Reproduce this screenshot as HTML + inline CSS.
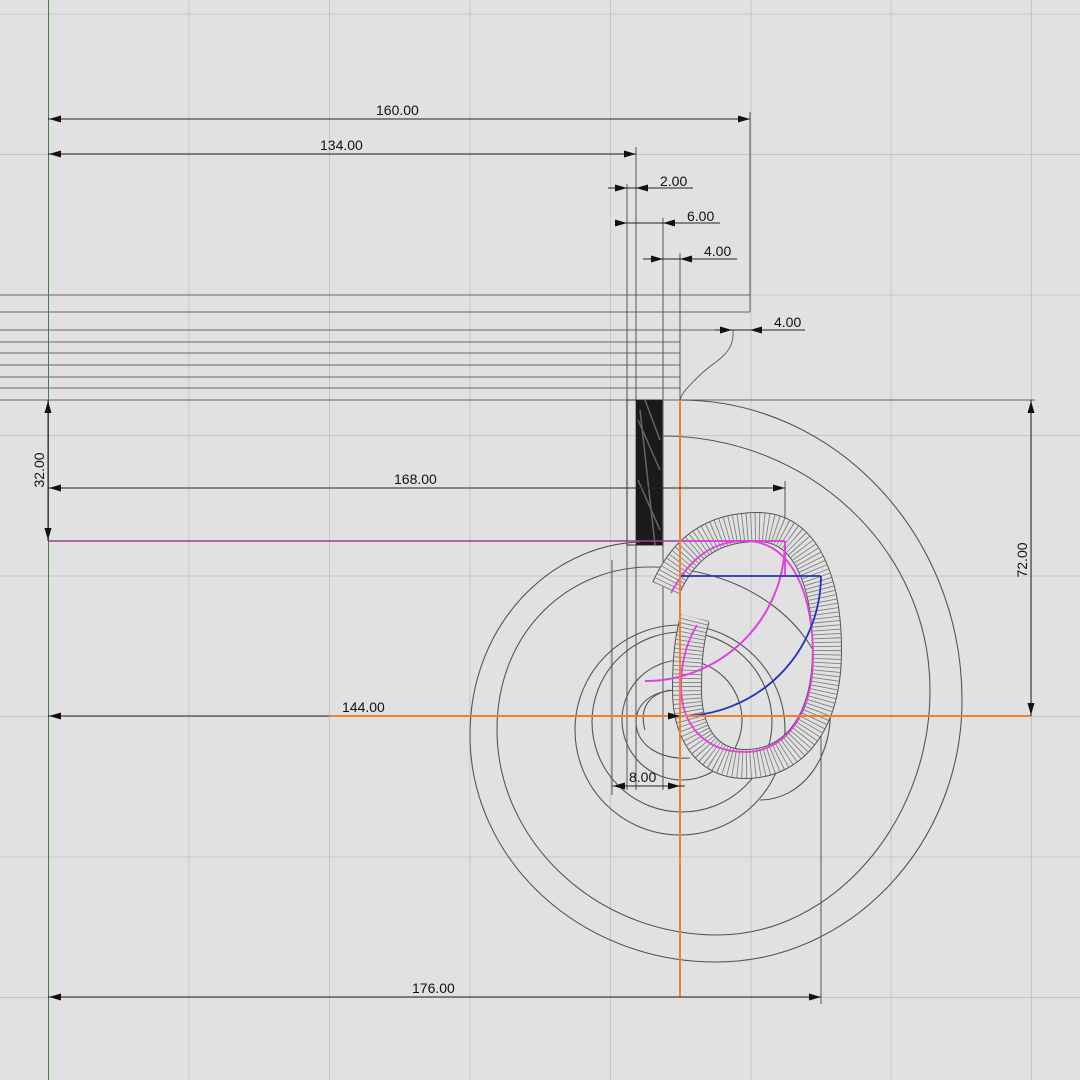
<!DOCTYPE html>
<html><head><meta charset="utf-8"><style>
html,body{margin:0;padding:0;background:#e1e1e1;}
svg{display:block}
text{font-family:"Liberation Sans",sans-serif;font-size:14px;fill:#111}
</style></head><body>
<svg width="1080" height="1080" viewBox="0 0 1080 1080" xmlns="http://www.w3.org/2000/svg">
<rect width="1080" height="1080" fill="#e1e1e1"/>
<g stroke="#c6c6c6" stroke-width="1">
<line x1="189" y1="0" x2="189" y2="1080"/><line x1="329.5" y1="0" x2="329.5" y2="1080"/>
<line x1="470" y1="0" x2="470" y2="1080"/><line x1="610.5" y1="0" x2="610.5" y2="1080"/>
<line x1="751" y1="0" x2="751" y2="1080"/><line x1="891" y1="0" x2="891" y2="1080"/>
<line x1="1031.5" y1="0" x2="1031.5" y2="1080"/>
<line x1="0" y1="14" x2="1080" y2="14"/><line x1="0" y1="154.5" x2="1080" y2="154.5"/>
<line x1="0" y1="295" x2="1080" y2="295"/><line x1="0" y1="435.5" x2="1080" y2="435.5"/>
<line x1="0" y1="576" x2="1080" y2="576"/><line x1="0" y1="716.5" x2="1080" y2="716.5"/>
<line x1="0" y1="857" x2="1080" y2="857"/><line x1="0" y1="997.5" x2="1080" y2="997.5"/>
</g>
<line x1="48.5" y1="0" x2="48.5" y2="1080" stroke="#4a7a4a" stroke-width="1"/>

<g stroke="#666" stroke-width="1" fill="none">
<line x1="0" y1="295" x2="750" y2="295"/><line x1="0" y1="312" x2="750" y2="312"/>
<line x1="750" y1="295" x2="750" y2="312"/>
<line x1="0" y1="330" x2="732" y2="330"/>
<line x1="0" y1="342" x2="680" y2="342"/><line x1="0" y1="353" x2="680" y2="353"/>
<line x1="0" y1="365" x2="680" y2="365"/><line x1="0" y1="377" x2="680" y2="377"/>
<line x1="0" y1="388" x2="680" y2="388"/>
<line x1="0" y1="400" x2="1035" y2="400"/>
<path d="M733,330 C735,355 715,360 700,375 C690,385 682,392 680,400"/>
</g>
<g stroke="#555" stroke-width="1">
<line x1="627" y1="184" x2="627" y2="790"/>
<line x1="636" y1="147" x2="636" y2="790"/>
<line x1="663" y1="218" x2="663" y2="790"/>
<line x1="680" y1="253" x2="680" y2="400"/>
<line x1="612" y1="560" x2="612" y2="795"/>
<line x1="750" y1="112" x2="750" y2="295"/>
<line x1="785" y1="481" x2="785" y2="545"/>
<line x1="821" y1="576" x2="821" y2="1004"/>
</g>
<rect x="627" y="400" width="35" height="145" fill="none" stroke="#333"/>
<rect x="636" y="400" width="26" height="145" fill="#1a1a1a"/>
<path d="M638,420 L660,470 M638,480 L660,530 M640,410 L655,545 M645,400 L660,440" stroke="#666" stroke-width="1.5" fill="none"/>

<g stroke="#555" stroke-width="1.1" fill="none">
<path d="M680,400 C835,400 962,535 962,700 C962,845 850,962 716,962 C580,962 470,860 470,735 C470,625 550,545 640,542"/>
<path d="M662,436 C810,436 930,550 930,690 C930,825 830,935 718,935 C595,935 497,840 497,730 C497,630 570,567 650,567 C740,567 820,620 830,700 C835,760 800,800 760,800"/>
<circle cx="680" cy="730" r="105"/>
<circle cx="682" cy="722" r="90"/>
<circle cx="682" cy="720" r="60"/>
<path d="M680,690 C650,690 636,705 636,722 C636,745 660,760 690,758"/>
<path d="M670,690 C645,695 640,712 645,730"/>
</g>
<g fill="none">
<path id="r" d="M666,588 C686,543 718,527 758,527 C810,527 827,590 827,650 C827,722 795,764 745,764 C705,764 687,730 687,690 C687,660 689,640 695,618" stroke="#555" stroke-width="30"/>
<path d="M666,588 C686,543 718,527 758,527 C810,527 827,590 827,650 C827,722 795,764 745,764 C705,764 687,730 687,690 C687,660 689,640 695,618" stroke="#e1e1e1" stroke-width="28"/>
<path d="M666,588 C686,543 718,527 758,527 C810,527 827,590 827,650 C827,722 795,764 745,764 C705,764 687,730 687,690 C687,660 689,640 695,618" stroke="#808080" stroke-width="28" stroke-dasharray="0.9 3.2"/>
<path d="M671,593 C690,558 712,541 745,541 C795,541 813,600 813,656 C813,715 785,752 745,752 C705,752 681,725 681,686 C681,660 688,640 697,625" stroke="#e040e0" stroke-width="1.8"/>
</g>
<g fill="none">
<line x1="48" y1="541" x2="785" y2="541" stroke="#9a3aa0" stroke-width="1.5"/>
<line x1="680" y1="541" x2="785" y2="541" stroke="#e040e0" stroke-width="1.8"/>
<line x1="785" y1="541" x2="785" y2="575" stroke="#e040e0" stroke-width="1.8"/>
<path d="M785,545 A140,140 0 0 1 645,681" stroke="#e040e0" stroke-width="2"/>
<line x1="680" y1="576" x2="821" y2="576" stroke="#2233bb" stroke-width="1.8"/>
<path d="M821,576 A141,141 0 0 1 680,716" stroke="#2233bb" stroke-width="1.8"/>
</g>
<line x1="329" y1="716" x2="1031" y2="716" stroke="#f08030" stroke-width="2"/>
<line x1="680" y1="400" x2="680" y2="997" stroke="#f08030" stroke-width="2"/>

<g stroke="#222" stroke-width="1" fill="none">
<line x1="48" y1="119" x2="750" y2="119"/>
<line x1="48" y1="154" x2="636" y2="154"/>
<line x1="608" y1="188" x2="693" y2="188"/>
<line x1="617" y1="223" x2="720" y2="223"/>
<line x1="643" y1="259" x2="737" y2="259"/>
<line x1="715" y1="330" x2="805" y2="330"/>
<line x1="48" y1="400" x2="48" y2="541"/>
<line x1="48" y1="488" x2="785" y2="488"/>
<line x1="1031" y1="400" x2="1031" y2="716"/>
<line x1="48" y1="716" x2="329" y2="716"/>
<line x1="612" y1="786" x2="685" y2="786"/>
<line x1="48" y1="997" x2="821" y2="997"/>
</g>
<g fill="#111">
<path d="M49,119 l12,-3.5 v7z"/><path d="M750,119 l-12,-3.5 v7z"/>
<path d="M49,154 l12,-3.5 v7z"/><path d="M636,154 l-12,-3.5 v7z"/>
<path d="M627,188 l-12,-3.5 v7z"/><path d="M636,188 l12,-3.5 v7z"/>
<path d="M627,223 l-12,-3.5 v7z"/><path d="M663,223 l12,-3.5 v7z"/>
<path d="M663,259 l-12,-3.5 v7z"/><path d="M680,259 l12,-3.5 v7z"/>
<path d="M732,330 l-12,-3.5 v7z"/><path d="M750,330 l12,-3.5 v7z"/>
<path d="M48,401 l-3.5,12 h7z"/><path d="M48,540 l-3.5,-12 h7z"/>
<path d="M49,488 l12,-3.5 v7z"/><path d="M785,488 l-12,-3.5 v7z"/>
<path d="M1031,401 l-3.5,12 h7z"/><path d="M1031,715 l-3.5,-12 h7z"/>
<path d="M49,716 l12,-3.5 v7z"/><path d="M680,716 l-12,-3.5 v7z"/>
<path d="M613,786 l12,-3.5 v7z"/><path d="M680,786 l-12,-3.5 v7z"/>
<path d="M49,997 l12,-3.5 v7z"/><path d="M821,997 l-12,-3.5 v7z"/>
</g>
<text x="376" y="115">160.00</text>
<text x="320" y="150">134.00</text>
<text x="660" y="186">2.00</text>
<text x="687" y="221">6.00</text>
<text x="704" y="256">4.00</text>
<text x="774" y="327">4.00</text>
<text x="394" y="484">168.00</text>
<text x="342" y="712">144.00</text>
<text x="629" y="782">8.00</text>
<text x="412" y="993">176.00</text>
<text transform="translate(44,470) rotate(-90)" text-anchor="middle">32.00</text>
<text transform="translate(1027,560) rotate(-90)" text-anchor="middle">72.00</text>
</svg>
</body></html>
